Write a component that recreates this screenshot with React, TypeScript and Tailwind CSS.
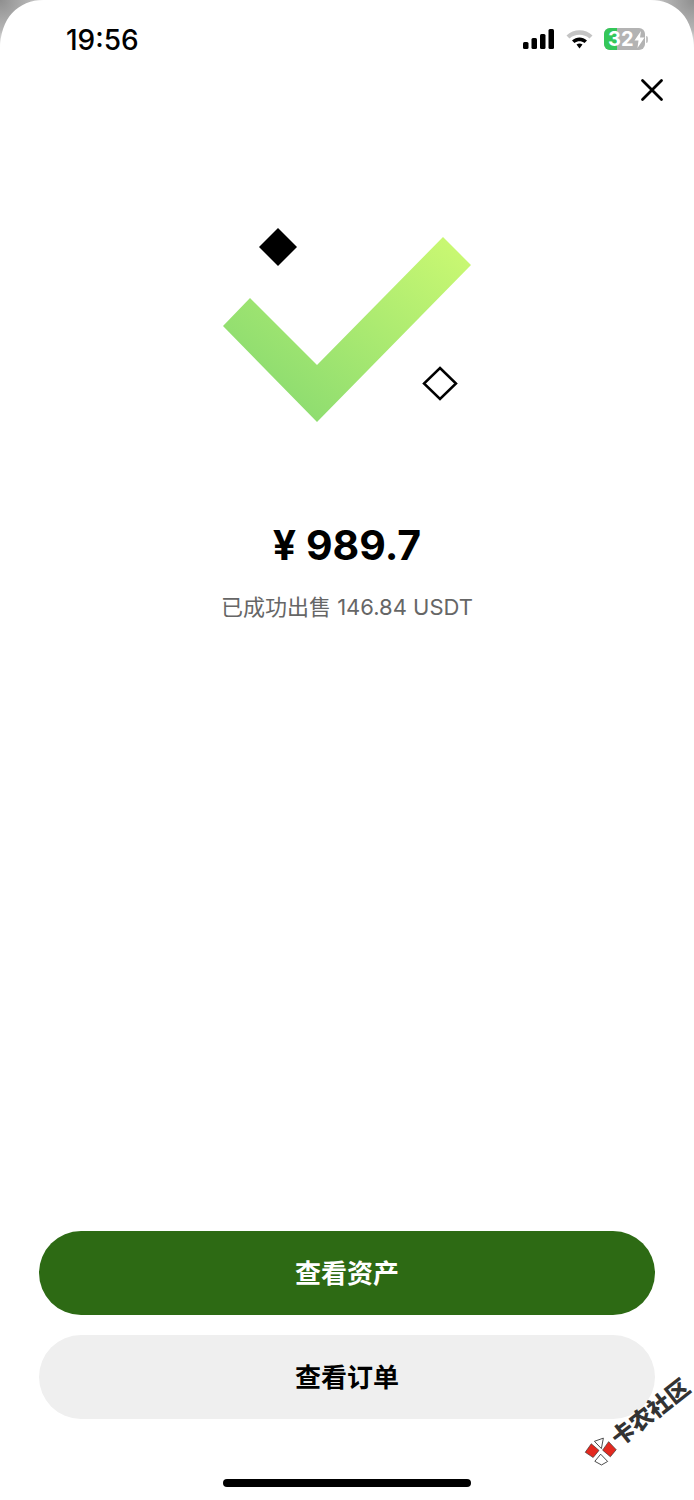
const cjk = "font-['Inter','Noto_Sans_CJK_SC',sans-serif]"

function Corner({ side }: { side: 'left' | 'right' }) {
  const id = `corner-${side}`
  return (
    <svg
      width="44"
      height="52"
      viewBox="0 0 44 52"
      className={side === 'left' ? 'absolute left-0 top-0' : 'absolute right-0 top-0 -scale-x-100'}
    >
      <defs>
        <radialGradient id={id} gradientUnits="userSpaceOnUse" cx="0" cy="0" r="50">
          <stop offset="0" stopColor="#8f8f8f" />
          <stop offset="0.6" stopColor="#b5b5b5" />
          <stop offset="1" stopColor="#ffffff" />
        </radialGradient>
      </defs>
      <path d="M0 0H44C18 0 0 18 0 50Z" fill={`url(#${id})`} />
    </svg>
  )
}

function StatusBar() {
  return (
    <div className="flex h-[78px] items-start justify-between pl-[66px] pr-[46px] pt-[22px]">
      <span className="text-[28px] font-medium leading-[36px] text-black">19:56</span>
      <div className="flex items-center gap-[11px] pt-[6px]">
        <svg width="32" height="20" viewBox="0 0 32 20">
          <rect x="0" y="13" width="5.5" height="7" rx="1.5" fill="#000" />
          <rect x="8.5" y="9" width="5.5" height="11" rx="1.5" fill="#000" />
          <rect x="17" y="5" width="5.5" height="15" rx="1.5" fill="#000" />
          <rect x="25.5" y="0" width="5.5" height="20" rx="1.5" fill="#000" />
        </svg>
        <svg width="27" height="20" viewBox="0 0 27 20">
          <path d="M0.5 6.5C7.5 -0.5 19.5 -0.5 26.5 6.5L23.5 9.5C18 4.5 9 4.5 3.5 9.5Z" fill="#c4c4c4" />
          <path d="M6 11.5C10.5 7.5 16.5 7.5 21 11.5L18.5 14C15.5 11.7 11.5 11.7 8.5 14Z" fill="#000" />
          <path d="M10.5 15.5C12.5 14 14.5 14 16.5 15.5L13.5 19.5Z" fill="#000" />
        </svg>
        <div className="flex items-center gap-[1px]">
          <div className="relative flex h-[22px] w-[41px] items-center overflow-hidden rounded-[6px] bg-[#b3b3b3]">
            <div className="absolute inset-y-0 left-0 w-[13px] bg-[#34c759]" />
            <span className="relative pl-[4px] text-[20px] font-bold leading-none text-white">32</span>
            <svg width="11" height="17" viewBox="0 0 11 17" className="relative">
              <path d="M7 0L0.5 9.5H4.5L3.5 17L10.5 6.5H6Z" fill="#fff" />
            </svg>
          </div>
          <div className="h-[7px] w-[2px] rounded-r-sm bg-[#c4c4c4]" />
        </div>
      </div>
    </div>
  )
}

function SuccessMark() {
  return (
    <svg width="250" height="196" viewBox="0 0 250 196" className="block">
      <defs>
        <linearGradient id="check" gradientUnits="userSpaceOnUse" x1="235" y1="10" x2="85" y2="190">
          <stop offset="0" stopColor="#cbf972" />
          <stop offset="1" stopColor="#8fdd70" />
        </linearGradient>
      </defs>
      <path d="M28 72L95 139L221 11L249 39L95 196L1 100Z" fill="url(#check)" />
      <path d="M56 2L75 21L56 40L37 21Z" fill="#000" />
      <path d="M218 142L234 157.500L218 173L202 157.500Z" fill="#fff" stroke="#000" strokeWidth="2.500" />
    </svg>
  )
}

function Watermark() {
  return (
    <div className="absolute left-[590px] top-[1446px] flex origin-left -rotate-[38deg] items-center gap-[3px]">
      <svg width="28" height="28" viewBox="0 0 28 28">
        <path d="M1 5L11 2L13 12L4 14Z" fill="#e3291f" stroke="#333" strokeWidth="0.6" />
        <path d="M16 14L26 11L27 22L18 24Z" fill="#e3291f" stroke="#333" strokeWidth="0.6" />
        <path d="M15 2L24 5L16 12Z" fill="#fff" stroke="#333" strokeWidth="0.8" />
        <path d="M3 18L12 16L13 26L6 25Z" fill="#fff" stroke="#333" strokeWidth="0.8" />
      </svg>
      <span className="whitespace-nowrap text-[23px] font-black leading-none text-[#333]">卡农社区</span>
    </div>
  )
}

export default function App() {
  return (
    <div className={`${cjk} relative flex h-[1500px] w-[694px] flex-col overflow-hidden bg-white`}>
      <Corner side="left" />
      <Corner side="right" />
      <StatusBar />

      <div className="flex justify-end pr-[30px]">
        <svg width="24" height="24" viewBox="0 0 24 24">
          <path d="M2.500 2.500L21.500 21.500M21.500 2.500L2.500 21.500" stroke="#000" strokeWidth="2.800" strokeLinecap="round" />
        </svg>
      </div>

      <div className="mt-[124px] flex flex-col items-center">
        <div className="pl-[0px]">
          <SuccessMark />
        </div>
        <div className="mt-[98px] text-[41px] font-bold leading-[50px] text-black">¥ 989.7</div>
        <div className="mt-[21px] text-[22px] leading-[32px] text-[#666666]">已成功出售 146.84 USDT</div>
      </div>

      <div className="mt-auto flex flex-col gap-[20px] px-[39px]">
        <button type="button" className="h-[84px] rounded-[42px] bg-[#2d6a14] text-[26px] font-semibold text-white">
          查看资产
        </button>
        <button type="button" className="h-[84px] rounded-[42px] bg-[#efefef] text-[26px] font-semibold text-black">
          查看订单
        </button>
      </div>

      <div className="mt-[60px] mb-[13px] flex justify-center">
        <div className="h-[8px] w-[248px] rounded-full bg-black" />
      </div>

      <Watermark />
    </div>
  )
}
